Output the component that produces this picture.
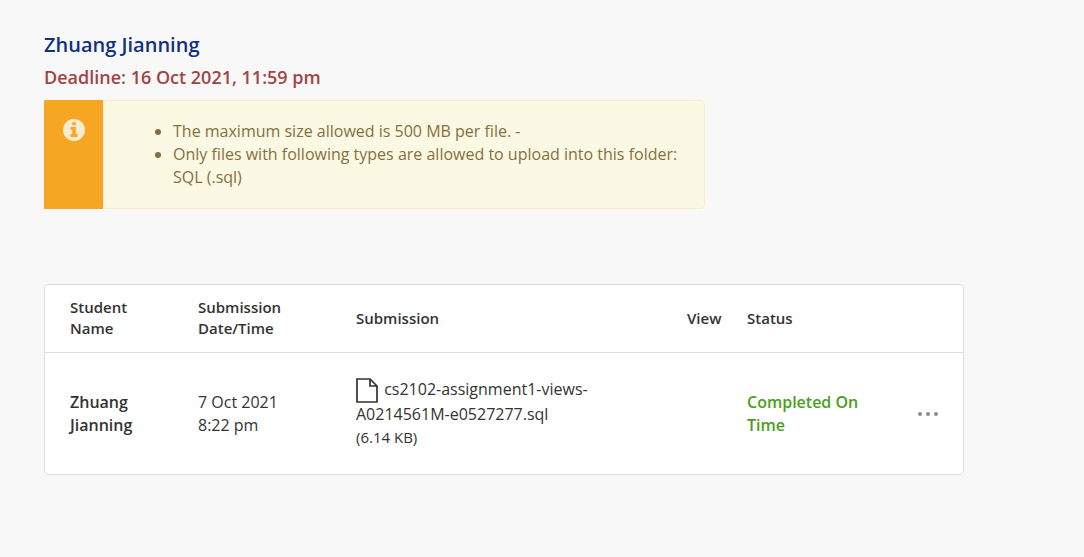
<main class="page">
  <h1>Zhuang Jianning</h1>
  <h2>Deadline: 16 Oct 2021, 11:59 pm</h2>

  <section class="notice" aria-label="Upload rules">
    <div class="notice-icon">
      <svg viewBox="0 0 22 22" width="22" height="22" aria-hidden="true">
        <circle cx="11" cy="11" r="11" fill="#f8ebcf" />
        <path d="M9.300 3.300h3.500v3H9.300zM7.500 8h5.300v7h1.700v3h-7v-3h1.800v-4.200H7.500z" fill="#f5a623" />
      </svg>
    </div>
    <ul>
      <li>The maximum size allowed is 500 MB per file. -</li>
      <li>Only files with following types are allowed to upload into this folder: SQL (.sql)</li>
    </ul>
  </section>

  <div class="card">
    <table>
      <colgroup>
        <col class="c-name" /><col class="c-date" /><col class="c-file" /><col class="c-view" /><col class="c-status" /><col />
      </colgroup>
      <thead>
        <tr>
          <th>Student<br />Name</th>
          <th>Submission Date/Time</th>
          <th>Submission</th>
          <th>View</th>
          <th>Status</th>
          <td></td>
        </tr>
      </thead>
      <tbody>
        <tr>
          <td class="name">Zhuang Jianning</td>
          <td>7 Oct 2021<br />8:22 pm</td>
          <td class="file">
            <svg viewBox="0 0 22 25" width="22" height="25" aria-hidden="true">
              <path d="M1 1h13l7 7v16H1zM14 1v7h7" fill="none" stroke="#333" stroke-width="1.7" />
            </svg>
            <a href="#file">cs2102-assignment1-views-A0214561M-e0527277.sql</a>
            <small>(6.14 KB)</small>
          </td>
          <td></td>
          <td class="status">Completed On Time</td>
          <td class="more">
            <button type="button" aria-label="More actions">
              <svg viewBox="0 0 20 6" width="20" height="6" aria-hidden="true">
                <circle cx="2" cy="3" r="2" /><circle cx="10" cy="3" r="2" /><circle cx="18" cy="3" r="2" />
              </svg>
            </button>
          </td>
        </tr>
      </tbody>
    </table>
  </div>
</main>

<style>
  :global(body) {
    margin: 0;
    background: #f8f8f8;
  }
  .page {
    box-sizing: border-box;
    max-width: 1008px;
    padding: 32px 44px;
    font: 16px/23px "Open Sans", sans-serif;
    color: #333;
  }
  h1 {
    margin: 0;
    font-size: 20px;
    line-height: 26px;
    font-weight: 600;
    color: #12307f;
  }
  h2 {
    margin: 6px 0 10px;
    font-size: 18px;
    line-height: 26px;
    font-weight: 600;
    color: #a04545;
  }
  .notice {
    display: flex;
    box-sizing: border-box;
    max-width: 661px;
    color: #86703f;
  }
  .notice-icon {
    flex: 0 0 59px;
    display: flex;
    justify-content: center;
    align-items: flex-start;
    padding-top: 19px;
    box-sizing: border-box;
    background: #f5a623;
  }
  ul {
    flex: 1;
    margin: 0;
    padding: 19px 16px 19px 69px;
    border: 1px solid #faebcc;
    border-radius: 5px;
    background: #fbf8e3;
  }
  .card {
    margin-top: 75px;
    border: 1px solid #ddd;
    border-radius: 4px;
    background: #fff;
  }
  table {
    width: 100%;
    table-layout: fixed;
    border-collapse: collapse;
  }
  .c-name { width: 140px; }
  .c-date { width: 158px; }
  .c-file { width: 331px; }
  .c-view { width: 60px; }
  .c-status { width: 154px; }
  th, td {
    padding: 0 13px;
    text-align: left;
    vertical-align: middle;
  }
  th:first-child, td:first-child { padding-left: 25px; }
  th {
    height: 66px;
    padding-bottom: 1px;
    font-size: 15px;
    line-height: 21px;
    font-weight: 600;
  }
  tbody tr { border-top: 1px solid #ddd; }
  tbody td { height: 121px; }
  .name, .status { font-weight: 600; }
  .status { color: #4a9f1b; }
  .file { line-height: 23px; }
  .file svg {
    margin-right: 2px;
    vertical-align: middle;
  }
  .file a { color: inherit; text-decoration: none; }
  .file small {
    display: block;
    font-size: 15px;
  }
  .more { padding: 0 25px 0 0; }
  button {
    display: flex;
    margin-left: auto;
    padding: 4px 0;
    border: 0;
    background: none;
    fill: #8c8c8c;
  }
</style>
